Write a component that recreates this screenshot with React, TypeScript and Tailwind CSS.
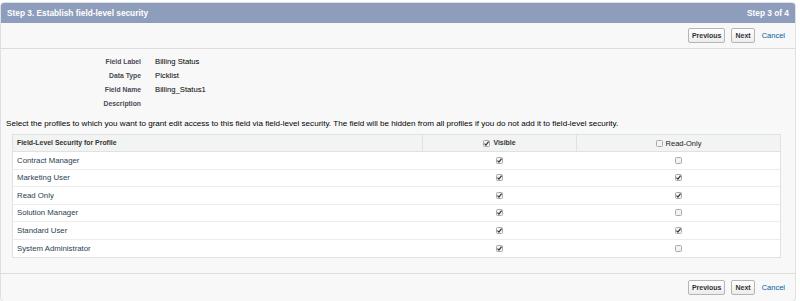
import React from 'react';

const profiles = [
  { name: 'Contract Manager', visible: true, readOnly: false },
  { name: 'Marketing User', visible: true, readOnly: true },
  { name: 'Read Only', visible: true, readOnly: true },
  { name: 'Solution Manager', visible: true, readOnly: false },
  { name: 'Standard User', visible: true, readOnly: true },
  { name: 'System Administrator', visible: true, readOnly: false },
];

const details = [
  { label: 'Field Label', value: 'Billing Status' },
  { label: 'Data Type', value: 'Picklist' },
  { label: 'Field Name', value: 'Billing_Status1' },
  { label: 'Description', value: '' },
];

const Check = ({ checked }: { checked: boolean }) => (
  <svg width="7" height="7" viewBox="0 0 7 7" className="inline-block align-middle">
    <rect x="0.5" y="0.5" width="6" height="6" rx="1" fill="#f3f3f3" stroke="#a9a9a9" />
    {checked && <path d="M1.5 3.7 L2.9 5.1 L5.6 1.7" fill="none" stroke="#333" strokeWidth="1.2" />}
  </svg>
);

const Buttons = () => (
  <div className="flex items-center justify-end gap-[6px] pr-[10px]">
    <button className="h-[15px] px-[3px] rounded-[2px] border border-[#b5b5b5] bg-gradient-to-b from-white to-[#ececec] text-[7px] font-bold text-[#333] leading-none">
      Previous
    </button>
    <button className="h-[15px] px-[3px] rounded-[2px] border border-[#b5b5b5] bg-gradient-to-b from-white to-[#ececec] text-[7px] font-bold text-[#333] leading-none">
      Next
    </button>
    <a className="ml-[1px] text-[7.5px] text-[#015ba7]">Cancel</a>
  </div>
);

export default function App() {
  return (
    <div className="bg-white pt-[2px] pr-[4px] font-['Liberation_Sans',Arial,sans-serif] text-[8px] text-[#222]">
      <div className="rounded-[4px] border border-[#e0e0e0] bg-[#f8f8f8] overflow-hidden">
        <div className="flex h-[20px] items-center justify-between bg-[#8f9dbd] px-[6px] text-[8.3px] font-bold text-white">
          <span>Step 3. Establish field-level security</span>
          <span>Step 3 of 4</span>
        </div>

        <div className="flex h-[26px] items-center justify-end border-b border-[#dcdcdc]">
          <Buttons />
        </div>

        <div className="flex flex-col pt-[6px]">
          {details.map((d) => (
            <div key={d.label} className="flex h-[14px] items-center">
              <span className="w-[140px] text-right text-[6.8px] font-bold text-[#4a4a56]">{d.label}</span>
              <span className="pl-[14px] text-[7.7px] text-black">{d.value}</span>
            </div>
          ))}
        </div>

        <p className="mt-[7px] pl-[5px] text-[8.1px] text-black">
          Select the profiles to which you want to grant edit access to this field via field-level security. The field will be hidden from all profiles if you do not add it to field-level security.
        </p>

        <div className="ml-[11px] mr-[14px] mt-[4px] border border-[#dfe1e2] bg-white">
          <div className="grid h-[17px] grid-cols-[409px_154px_1fr] items-center border-b border-[#dfe1e2] bg-[#f2f3f3] text-[6.9px] font-bold text-[#333]">
            <span className="pl-[4px]">Field-Level Security for Profile</span>
            <span className="flex h-full items-center justify-center gap-[3px] border-l border-[#dfe1e2]">
              <Check checked />
              Visible
            </span>
            <span className="flex h-full items-center justify-center gap-[3px] border-l border-[#dfe1e2]">
              <Check checked={false} />
              <span className="font-normal text-[7.5px] text-[#222]">Read-Only</span>
            </span>
          </div>
          {profiles.map((p, i) => (
            <div
              key={p.name}
              className={`grid h-[17.5px] grid-cols-[409px_154px_1fr] items-center ${i < profiles.length - 1 ? 'border-b border-[#ececec]' : ''}`}
            >
              <span className="pl-[4px] text-[7.8px] text-[#2b3e50]">{p.name}</span>
              <span className="flex justify-center">
                <Check checked={p.visible} />
              </span>
              <span className="flex justify-center">
                <Check checked={p.readOnly} />
              </span>
            </div>
          ))}
        </div>

        <div className="mt-[15px] flex h-[28px] items-center justify-end border-t border-[#dcdcdc]">
          <Buttons />
        </div>
      </div>
    </div>
  );
}
